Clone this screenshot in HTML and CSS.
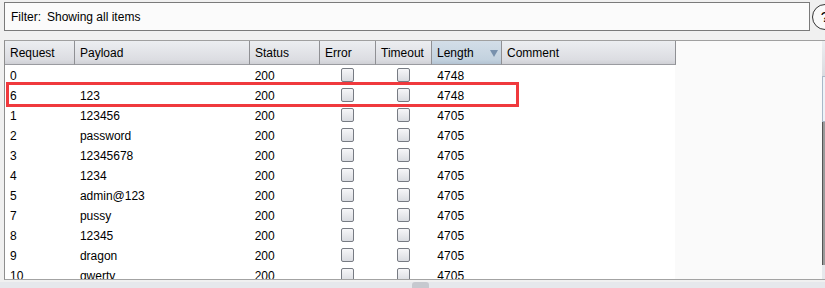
FILE: index.html
```html
<!DOCTYPE html>
<html lang="en">
<head>
  <meta charset="UTF-8" />
  <title>Intruder results</title>
  <link rel="stylesheet" href="styles.css">
</head>
<body>

  <div class="top">
    <div class="filter">
      <span>Filter:</span>
      <span>Showing all items</span>
    </div>
    <div class="help">?</div>
  </div>

  <div class="panel">
    <div class="viewport">
      <div class="head">
        <div class="hcell c-req">Request</div>
        <div class="hcell c-pay">Payload</div>
        <div class="hcell c-sta">Status</div>
        <div class="hcell c-err">Error</div>
        <div class="hcell c-tim">Timeout</div>
        <div class="hcell c-len sorted">Length <span class="arrow"></span></div>
        <div class="hcell c-com">Comment</div>
        <div class="hfill"></div>
      </div>

      <div class="body" id="rows"></div>

      <div class="mark"></div>
    </div>
    <div class="vscroll">
      <div class="vbtn"></div>
      <div class="vthumb"></div>
      <div class="vtrack"></div>
    </div>
  </div>

  <div class="hscroll">
    <div class="hthumb"></div>
  </div>

  <script>
    const rows = [
      [0, '', 200, 4748],
      [6, '123', 200, 4748],
      [1, '123456', 200, 4705],
      [2, 'password', 200, 4705],
      [3, '12345678', 200, 4705],
      [4, '1234', 200, 4705],
      [5, 'admin@123', 200, 4705],
      [7, 'pussy', 200, 4705],
      [8, '12345', 200, 4705],
      [9, 'dragon', 200, 4705],
      [10, 'qwerty', 200, 4705]
    ];

    const body = document.getElementById('rows');

    rows.forEach(function (r) {
      const row = document.createElement('div');
      row.className = 'row';
      row.innerHTML =
        '<div class="cell c-req">' + r[0] + '</div>' +
        '<div class="cell c-pay">' + r[1] + '</div>' +
        '<div class="cell c-sta">' + r[2] + '</div>' +
        '<div class="cell c-err"><span class="check"></span></div>' +
        '<div class="cell c-tim"><span class="check"></span></div>' +
        '<div class="cell c-len">' + r[3] + '</div>' +
        '<div class="cell c-com"></div>';
      body.appendChild(row);
    });
  </script>

</body>
</html>
```

FILE: styles.css
```css
body {
  margin: 0;
  width: 825px;
  height: 288px;
  overflow: hidden;
  background-color: #f0f0f0;
  font-family: 'Liberation Sans', Arial, sans-serif;
  font-size: 12px;
  color: #000;
}

.top {
  display: flex;
  gap: 2px;
  padding: 2px 0 0 4px;
  width: 850px;
}

.filter {
  width: 806px;
  height: 29px;
  border: 1px solid #7a7a7a;
  background-color: #fbfbfb;
  display: flex;
  align-items: center;
  gap: 6px;
  padding: 1px 0 0 6px;
  box-sizing: border-box;
}

.help {
  width: 24px;
  height: 24px;
  margin-top: 2px;
  border: 1px solid #333;
  border-radius: 50%;
  background-color: #fafafa;
  text-align: center;
  line-height: 24px;
  font-size: 15px;
  flex-shrink: 0;
}

.panel {
  display: flex;
  margin: 9px 0 0 4px;
  width: 840px;
  height: 240px;
  border-top: 1px solid #a0a0a0;
  border-left: 1px solid #8e8e8e;
  border-bottom: 1px solid #a3a3a3;
  box-sizing: border-box;
}

.viewport {
  position: relative;
  width: 817px;
  overflow: hidden;
  background-color: #fafafa;
}

.head {
  display: flex;
  height: 24px;
}

.hcell {
  display: flex;
  align-items: center;
  padding: 1px 0 0 5px;
  box-sizing: border-box;
  border-right: 1px solid #8f9094;
  border-bottom: 1px solid #9a9ba0;
  background: linear-gradient(#eceef1, #dcdde2 80%, #cfd0d5);
}

.hcell.sorted {
  background: linear-gradient(#d3dee8, #c3d2df 80%, #b3c3d2);
}

.arrow {
  margin-left: 16px;
  width: 0;
  height: 0;
  border-left: 4px solid transparent;
  border-right: 4px solid transparent;
  border-top: 7px solid #7891ad;
}

.hfill {
  flex: 1;
}

.c-req { width: 70px; }
.c-pay { width: 175px; }
.c-sta { width: 70px; }
.c-err { width: 56px; }
.c-tim { width: 56px; }
.c-len { width: 70px; }
.c-com { width: 174px; }

.body {
  width: 670px;
  background-color: #fff;
}

.row {
  display: flex;
  height: 20px;
}

.cell {
  display: flex;
  align-items: center;
  padding: 2px 0 0 5px;
  box-sizing: border-box;
}

.row .c-err,
.row .c-tim {
  justify-content: center;
  padding: 0;
}

.row .c-len {
  padding-left: 6px;
}

.check {
  width: 11px;
  height: 12px;
  border: 1px solid #777b83;
  border-radius: 2px;
  background: linear-gradient(#f6f6f8, #dadce1);
  margin-left: -1px;
}

.row .c-tim .check {
  margin-left: 1px;
}

.mark {
  position: absolute;
  left: 1px;
  top: 41px;
  width: 513px;
  height: 25px;
  border: 3px solid #f0393d;
  box-sizing: border-box;
}

.vscroll {
  width: 17px;
  display: flex;
  flex-direction: column;
  background-color: #e6e8ec;
}

.vbtn {
  height: 35px;
  background: linear-gradient(#eceef1, #d9dbe0);
}

.vthumb {
  height: 44px;
  border: 1px solid #a9b8c8;
  background-color: #eef3f8;
}

.vtrack {
  height: 143px;
  border-left: 1px solid #555;
  background-color: #9a9a9a;
}

.hscroll {
  height: 8px;
  background-color: #e6e8ec;
}

.hthumb {
  margin-left: 412px;
  margin-top: 2px;
  width: 17px;
  height: 6px;
  border-radius: 3px 3px 0 0;
  background-color: #c6c9cf;
}
```
